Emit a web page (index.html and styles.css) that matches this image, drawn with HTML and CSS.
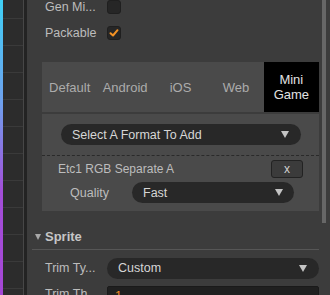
FILE: index.html
```html
<!DOCTYPE html>
<html>
<head>
  <title>Inspector</title>
  <link rel="stylesheet" href="styles.css">
</head>
<body>
  <div class="accent"></div>
  <div class="tree"></div>
  <div class="gutter"></div>

  <div class="inspector">
    <div class="content">
      <div class="prop">
        <span class="label">Gen Mi...</span>
        <span class="checkbox"></span>
      </div>
      <div class="prop">
        <span class="label">Packable</span>
        <span class="checkbox">
          <svg width="12" height="12" viewBox="0 0 12 12"><polyline points="2.5,6.2 5,8.5 9.5,3.2" fill="none" stroke="#f39224" stroke-width="2" stroke-linecap="round" stroke-linejoin="round"/></svg>
        </span>
      </div>

      <div class="platforms">
        <div class="tabs">
          <div class="tab">Default</div>
          <div class="tab">Android</div>
          <div class="tab">iOS</div>
          <div class="tab">Web</div>
          <div class="tab active">Mini<br>Game</div>
        </div>
        <div class="platform-body">
          <div class="select wide">
            <span>Select A Format To Add</span>
            <span class="arrow"></span>
          </div>
          <div class="format">
            <span class="format-name">Etc1 RGB Separate A</span>
            <button class="remove">x</button>
          </div>
          <div class="quality">
            <span class="quality-label">Quality</span>
            <div class="select">
              <span>Fast</span>
              <span class="arrow"></span>
            </div>
          </div>
        </div>
      </div>

      <div class="section">
        <span class="fold"></span>
        <span>Sprite</span>
      </div>
      <div class="section-body">
        <div class="prop">
          <span class="label">Trim Ty...</span>
          <div class="select grow">
            <span>Custom</span>
            <span class="arrow"></span>
          </div>
        </div>
        <div class="prop">
          <span class="label">Trim Th...</span>
          <div class="input">1</div>
        </div>
      </div>
    </div>
  </div>

  <div class="scrollbar">
    <div class="thumb"></div>
  </div>
</body>
</html>
```

FILE: styles.css
```css
body {
  margin: 0;
  height: 295px;
  overflow: hidden;
  display: flex;
  background-color: #3c3c3c;
  font-family: "Liberation Sans", Arial, sans-serif;
  font-size: 12.5px;
  color: #bdbdbd;
}
.accent {
  width: 3px;
  background: linear-gradient(#3fd0f5 0%, #6fa0ee 35%, #a34ed8 65%, #a547d6 100%);
}
.tree {
  width: 20px;
  background-color: #2c2c2c;
  background-image: repeating-linear-gradient(to bottom, transparent 0, transparent 17px, #3a3a3a 17px, #3a3a3a 18px, transparent 18px, transparent 27px);
  background-position: 0 1px;
  border-right: 1px solid #474747;
}
.gutter {
  width: 3px;
  background-color: #232323;
}
.inspector {
  flex: 1;
  overflow: hidden;
}
.content {
  margin-top: -6px;
}
.prop {
  height: 26px;
  display: flex;
  align-items: center;
  padding: 0 3px 0 18px;
}
.label {
  width: 62px;
  flex-shrink: 0;
  white-space: nowrap;
}
.checkbox {
  width: 14px;
  height: 14px;
  box-sizing: border-box;
  border: 1px solid #1f1f1f;
  border-radius: 3px;
  background-color: #262626;
  display: flex;
  align-items: center;
  justify-content: center;
}
.platforms {
  margin: 16px 3px 0 15px;
  background-color: #4a4a4a;
}
.tabs {
  display: flex;
  height: 50px;
  border-bottom: 2px solid #3c3c3c;
}
.tab {
  flex: 1;
  display: flex;
  align-items: center;
  justify-content: center;
  text-align: center;
  font-size: 13px;
  color: #acacac;
  line-height: 15px;
}
.tab.active {
  background-color: #000;
  color: #e2e2e2;
}
.platform-body {
  padding: 10px 0 8px 0;
}
.select {
  height: 21px;
  border-radius: 11px;
  background-color: #282828;
  color: #d6d6d6;
  display: flex;
  align-items: center;
  justify-content: space-between;
  padding: 0 11px;
  box-sizing: border-box;
}
.select.wide {
  margin: 0 18px 10px 19px;
  padding-right: 12px;
}
.select.grow {
  flex: 1;
  padding-right: 12px;
}
.arrow {
  width: 0;
  height: 0;
  border-left: 4px solid transparent;
  border-right: 4px solid transparent;
  border-top: 7px solid #c4c4c4;
}
.format {
  border-top: 1px dashed #2a2a2a;
  height: 26px;
  display: flex;
  align-items: center;
  justify-content: space-between;
  padding: 0 16px;
  font-size: 12px;
}
.remove {
  width: 32px;
  height: 18px;
  margin: 0;
  padding: 0;
  background-color: #3b3b3b;
  border: 1px solid #222;
  border-radius: 3px;
  color: #d0d0d0;
  font-family: "Liberation Sans", Arial, sans-serif;
  font-size: 12px;
  line-height: 14px;
}
.quality {
  display: flex;
  align-items: center;
  height: 21px;
  padding: 0 25px 0 28px;
}
.quality-label {
  width: 62px;
}
.quality .select {
  flex: 1;
}
.section {
  margin: 13px 3px 0 5px;
  height: 25px;
  border-bottom: 1px solid #565656;
  display: flex;
  align-items: center;
  padding-left: 3px;
  font-size: 13px;
  font-weight: bold;
  color: #c6c6c6;
}
.fold {
  width: 0;
  height: 0;
  border-left: 3px solid transparent;
  border-right: 3px solid transparent;
  border-top: 6px solid #a8a8a8;
  margin-right: 4px;
}
.section-body {
  padding-top: 5px;
}
.input {
  flex: 1;
  height: 21px;
  box-sizing: border-box;
  background-color: #202020;
  border: 1px solid #1a1a1a;
  border-radius: 2px;
  color: #f08a24;
  padding-left: 7px;
  line-height: 19px;
  margin-top: 4px;
}
.scrollbar {
  width: 8px;
}
.thumb {
  width: 4px;
  height: 223px;
  background-color: #676767;
}
```
